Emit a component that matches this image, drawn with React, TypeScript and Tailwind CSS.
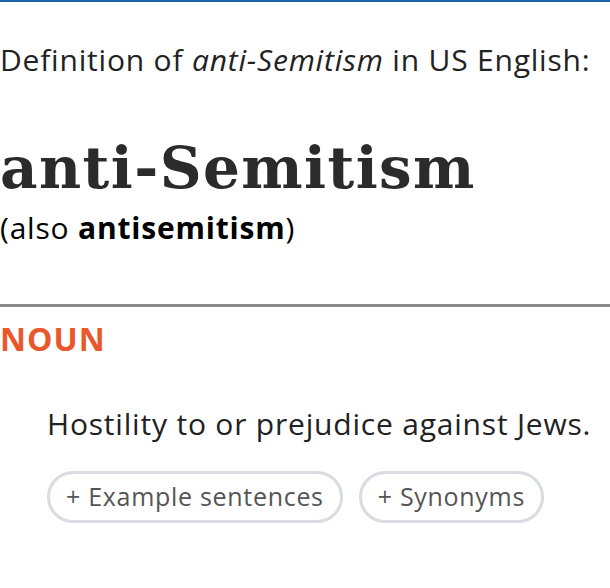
import React from "react";

export default function App() {
  return (
    <div className="w-[610px] h-[588px] bg-white overflow-hidden" style={{ fontFamily: '"Open Sans", sans-serif' }}>
      <div className="h-[2px] bg-[#1a62a6]" />
      <div className="pt-[38px] text-[30px] leading-[40px] tracking-[0.8px] text-[#222]">
        Definition of <em>anti-Semitism</em> in US English:
      </div>
      <h1
        className="mt-[56px] text-[58px] leading-[64px] font-bold text-[#2b2b2b] tracking-[1.4px]"
        style={{ fontFamily: '"DejaVu Serif", serif' }}
      >
        anti-Semitism
      </h1>
      <div className="mt-[8px] text-[30px] leading-[40px] tracking-[0.8px] text-black">
        (also <strong>antisemitism</strong>)
      </div>
      <div className="mt-[56px] h-[3px] bg-[#8a8a8a]" />
      <div className="mt-[12px] text-[32px] leading-[40px] font-bold tracking-[1px] text-[#e9582b]">NOUN</div>
      <div className="pl-[47px] mt-[45px]">
        <div className="text-[30px] leading-[40px] tracking-[0.8px] text-[#222]">Hostility to or prejudice against Jews.</div>
        <div className="mt-[27px] flex gap-[16px]">
          <button className="h-[52px] px-[16px] rounded-full border-[3px] border-[#d9dce0] text-[25px] tracking-[0.7px] text-[#555] bg-white">
            + Example sentences
          </button>
          <button className="h-[52px] px-[16px] rounded-full border-[3px] border-[#d9dce0] text-[25px] tracking-[0.7px] text-[#555] bg-white">
            + Synonyms
          </button>
        </div>
      </div>
    </div>
  );
}
